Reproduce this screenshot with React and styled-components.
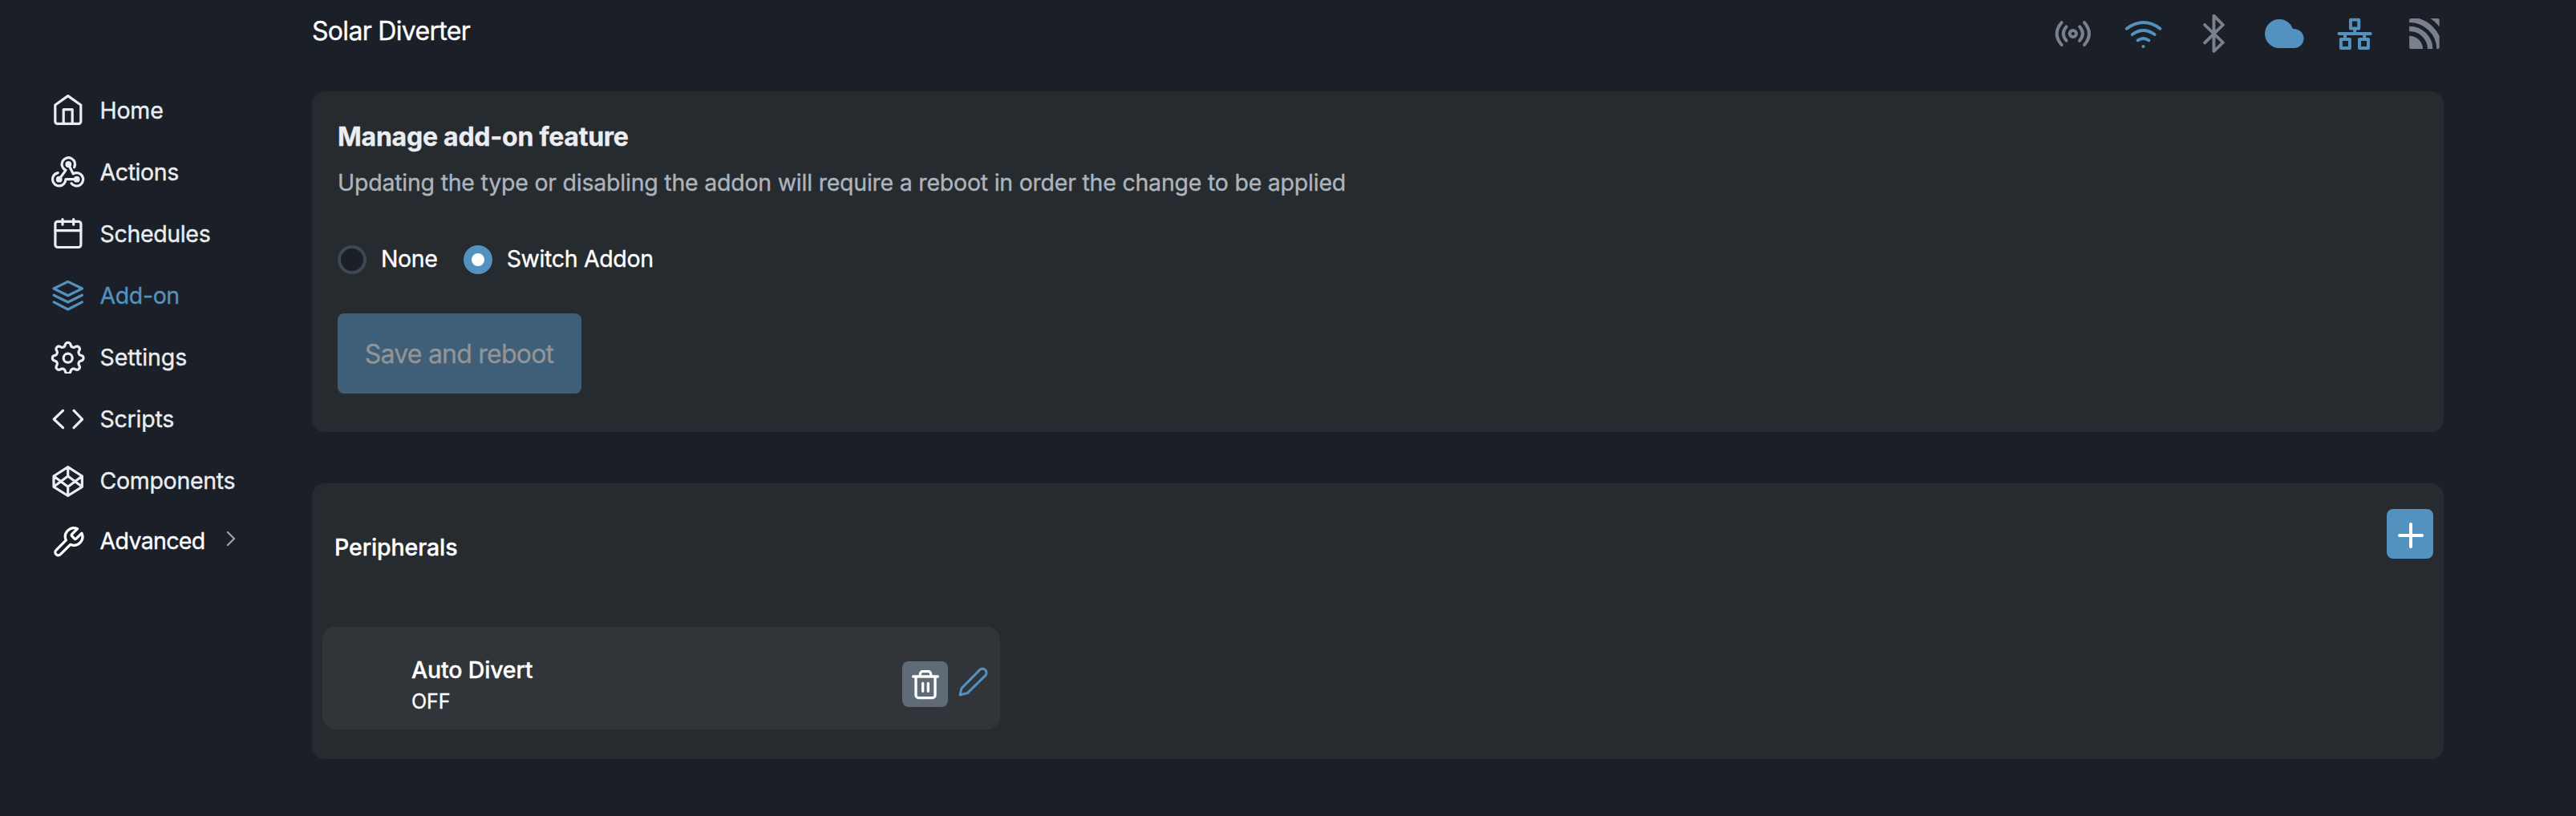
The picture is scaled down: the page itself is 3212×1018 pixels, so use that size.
import React, { useState } from "react";
import styled, { createGlobalStyle } from "styled-components";

const BLUE = "#5391bf";
const GREY = "#7b818c";
const LIGHT = "#ecedf0";

const GlobalStyle = createGlobalStyle`
  * { box-sizing: border-box; }
  body {
    margin: 0;
    background: #1b1f27;
    color: #fff;
    font-family: Inter, "Liberation Sans", sans-serif;
    -webkit-text-stroke: 0.35px currentColor;
  }
`;

const Page = styled.div`
  display: flex;
  min-height: 1018px;
`;

const Sidebar = styled.nav`
  flex: none;
  width: 389px;
  padding: 115px 0 0 62px;
  display: flex;
  flex-direction: column;
  gap: 33px;
`;

const NavItem = styled.a`
  display: flex;
  align-items: center;
  gap: 18.5px;
  height: 44px;
  margin-top: ${(p) => (p.$last ? "-2px" : 0)};
  color: ${(p) => p.$color || LIGHT};
  font-size: 28.5px;
  line-height: 44px;
  text-decoration: none;
`;

const NavLabel = styled.span`
  margin-top: 2px;
  letter-spacing: ${(p) => p.$track}px;
`;

const NavIcon = styled.svg`
  flex: none;
  display: block;
  width: 44px;
  height: 44px;
  fill: none;
  stroke: currentColor;
  stroke-width: 3.2;
  stroke-linecap: round;
  stroke-linejoin: round;
`;

const Chevron = styled.svg`
  flex: none;
  width: 14px;
  height: 22px;
  margin: 0 0 5px 7px;
  fill: none;
  stroke: #9aa1ad;
  stroke-width: 2.4;
  stroke-linecap: round;
  stroke-linejoin: round;
`;

const Main = styled.main`
  width: 2658px;
  display: flex;
  flex-direction: column;
`;

const TopBar = styled.header`
  display: flex;
  justify-content: space-between;
  height: 114px;
  padding-top: 18px;
`;

const DeviceName = styled.div`
  font-size: 32px;
  line-height: 42px;
  letter-spacing: -0.69px;
`;

const StatusIcons = styled.div`
  display: flex;
  gap: 38.5px;
  margin-right: -2.6px;
`;

const StatusIcon = styled.svg`
  display: block;
  width: 49.6px;
  height: 48px;
  color: ${(p) => (p.$active ? BLUE : GREY)};
  fill: none;
  stroke: currentColor;
  stroke-width: 11.5;
  stroke-linecap: round;
  stroke-linejoin: round;
  overflow: visible;
`;

const Card = styled.section`
  background: #262b2f;
  border-radius: 16px;
`;

const FeatureCard = styled(Card)`
  height: 425px;
  padding: 37px 32px 0;
`;

const PeripheralCard = styled(Card)`
  height: 344px;
  margin-top: 64px;
  padding: 32px 13px 0;
`;

const CardTitle = styled.h2`
  margin: 0;
  color: ${LIGHT};
  font-size: 32px;
  font-weight: 700;
  line-height: 40px;
  letter-spacing: -0.24px;
`;

const Description = styled.p`
  margin: 17px 0 0;
  color: #adb4be;
  font-size: 28.5px;
  line-height: 40px;
  letter-spacing: -0.225px;
`;

const RadioGroup = styled.div`
  display: flex;
  gap: 32px;
  margin-top: 58px;
`;

const RadioOption = styled.label`
  display: flex;
  gap: 18px;
  height: 36px;
  font-size: 28.5px;
  line-height: 33px;
  letter-spacing: -0.35px;
`;

const Radio = styled.input`
  appearance: none;
  flex: none;
  width: 36px;
  height: 36px;
  margin: 0;
  border: 4px solid #3e4855;
  border-radius: 50%;
  background: #1b1f27;
  &:checked {
    border: 10px solid ${BLUE};
    background: #fff;
  }
`;

const SaveButton = styled.button`
  display: block;
  width: 304px;
  height: 100px;
  margin-top: 49px;
  padding: 1px 1px 0 0;
  border: 0;
  border-radius: 8px;
  background: #3f5e77;
  color: #929496;
  font: 400 32px/40px Inter, "Liberation Sans", sans-serif;
  letter-spacing: -0.77px;
`;

const SectionHead = styled.div`
  display: flex;
  justify-content: space-between;
  height: 147px;
  padding-left: 15px;
`;

const SectionTitle = styled.h3`
  margin: 28px 0 0;
  font-size: 28.5px;
  font-weight: 500;
  line-height: 40px;
  letter-spacing: -0.1px;
`;

const AddButton = styled.button`
  width: 58px;
  height: 62px;
  padding: 0;
  border: 0;
  border-radius: 8px;
  background: ${BLUE};
`;

const Peripheral = styled.div`
  display: flex;
  width: 845px;
  height: 128px;
  padding: 34px 11px 0 111px;
  border-radius: 16px;
  background: #313539;
`;

const PeripheralText = styled.div`
  flex: 1;
`;

const PeripheralName = styled.div`
  font-size: 28.5px;
  font-weight: 500;
  line-height: 40px;
  letter-spacing: -0.17px;
`;

const PeripheralState = styled.div`
  font-size: 25px;
  line-height: 38px;
`;

const DeleteButton = styled.button`
  width: 57px;
  height: 57px;
  margin: 9px 10px 0 0;
  padding: 0;
  border: 0;
  border-radius: 8px;
  background: #5f6b77;
`;

const EditButton = styled.button`
  width: 44px;
  height: 44px;
  margin-top: 12px;
  padding: 0;
  border: 0;
  background: none;
`;

const Glyph = styled.svg`
  display: block;
  width: 100%;
  height: 100%;
  fill: none;
  stroke: ${(p) => p.$color};
  stroke-linecap: round;
  stroke-linejoin: round;
`;

const gear = Array.from({ length: 145 }, (_, i) => {
  const a = (i / 144) * Math.PI * 2;
  const r = 17 + 2.5 * Math.tanh(1.5 * Math.cos(8 * a));
  return `${i ? "L" : "M"}${(22.7 + r * Math.cos(a)).toFixed(2)} ${(23.7 + r * Math.sin(a)).toFixed(2)}`;
}).join("") + "Z";

const icons = {
  home: (
    <>
      <path d="M22.7 4.6 38.8 16V36.4a3 3 0 0 1-3 3H9.8a3 3 0 0 1-3-3V16Z" />
      <path d="M17.2 39.4V21.6H28.2V39.4" />
    </>
  ),
  actions: (
    <>
      <path d="M11.7 31.7 20 20.4A8.2 8.2 0 1 1 30.6 16.7" />
      <path d="M23.3 13 29.2 24.8A8.2 8.2 0 1 1 27 36.8" />
      <path d="M33.7 31.7H19.9A8.2 8.2 0 1 1 10.2 23.6" />
      <g fill="currentColor" stroke="none">
        <circle cx="23.3" cy="13" r="3.9" />
        <circle cx="11.7" cy="31.7" r="3.9" />
        <circle cx="33.7" cy="31.7" r="3.9" />
      </g>
    </>
  ),
  schedules: (
    <>
      <rect x="6.9" y="7.3" width="32" height="32.2" rx="3" />
      <path d="M6.9 18.6H38.9M16 4.5V11.2M29.7 4.5V11.2" />
    </>
  ),
  addon: (
    <path d="M22.7 5.4 5 14 22.7 22.7 40.5 14ZM5.2 22.2 22.7 31 40.4 22.2M5.2 30.9 22.7 40 40.4 30.9" />
  ),
  settings: (
    <>
      <clipPath id="gear-edge"><rect width="46" height="43" /></clipPath>
      <g clipPath="url(#gear-edge)">
        <path d={gear} />
        <circle cx="22.7" cy="23.7" r="5.5" />
      </g>
    </>
  ),
  scripts: <path d="M16.6 12.2 5.2 23 16.6 33.6M30 12.2 40.6 23 30 33.6" />,
  components: (
    <path d="M22.7 5.6 40.4 17V30.3L22.7 41.5 5 30.3V17ZM22.7 5.6V17M22.7 30.3V41.5M5 17 22.7 30.3 40.4 17M5 30.3 22.7 17 40.4 30.3" />
  ),
  advanced: (
    <g transform="translate(1.5 3.2) scale(1.79)" strokeWidth="1.8">
      <path d="M14.7 6.3a1 1 0 0 0 0 1.4l1.6 1.6a1 1 0 0 0 1.4 0l3.77-3.77a6 6 0 0 1-7.94 7.94l-6.91 6.91a2.12 2.12 0 0 1-3-3l6.91-6.91a6 6 0 0 1 7.94-7.94l-3.76 3.76z" />
    </g>
  ),
};

const navItems = [
  { id: "home", label: "Home", track: -0.2 },
  { id: "actions", label: "Actions", track: -0.4 },
  { id: "schedules", label: "Schedules", track: -0.34 },
  { id: "addon", label: "Add-on", track: -0.38 },
  { id: "settings", label: "Settings", track: -0.05 },
  { id: "scripts", label: "Scripts", track: -0.24 },
  { id: "components", label: "Components", track: -0.3 },
  { id: "advanced", label: "Advanced", track: -0.66, color: "#fff", last: true },
];

const statusItems = [
  {
    id: "access-point",
    draw: (
      <>
        <circle cx="72" cy="72" r="12" />
        <path d="M48 46Q26 72 48 98M31 30Q-4 72 31 114M96 46Q118 72 96 98M113 30Q148 72 113 114" />
      </>
    ),
  },
  {
    id: "wifi",
    active: true,
    draw: (
      <>
        <path d="M11 53Q72 7 132 53M31 75Q71 45 112 75M51 97Q71 83 91 97" />
        <circle cx="71" cy="120" r="6" fill="currentColor" stroke="none" />
      </>
    ),
  },
  { id: "bluetooth", draw: <path d="M38 39 104 105 71 138V5L104 39 38 106" /> },
  {
    id: "cloud",
    active: true,
    draw: (
      <path
        d="M53 18A53 54 0 0 0 53 126H105A36 36 0 0 0 105 54H101.500A52 54 0 0 0 53 18Z"
        fill="currentColor"
        stroke="none"
      />
    ),
  },
  {
    id: "network",
    active: true,
    draw: (
      <>
        <rect x="55" y="20" width="30" height="32.500" />
        <rect x="20" y="93" width="32" height="33" />
        <rect x="87" y="93" width="32" height="33" />
        <path d="M13 72H127M70 56V72M35 74V90M105 74V90" />
      </>
    ),
  },
  {
    id: "feed",
    draw: (
      <>
        <clipPath id="feed-edge"><rect x="12" y="15" width="109" height="114" rx="6" /></clipPath>
        <g clipPath="url(#feed-edge)">
          <circle cx="12" cy="129" r="49" fill="currentColor" stroke="none" />
          <circle cx="12" cy="129" r="75.5" strokeWidth="19" />
          <circle cx="12" cy="129" r="109" strokeWidth="20" />
          <circle cx="12" cy="129" r="152" strokeWidth="30" />
        </g>
      </>
    ),
  },
];

export default function App() {
  const [addon, setAddon] = useState("Switch Addon");
  return (
    <>
      <GlobalStyle />
      <Page>
        <Sidebar>
          {navItems.map((n) => (
            <NavItem key={n.id} $color={n.id === "addon" ? BLUE : n.color} $last={n.last}>
              <NavIcon viewBox="0 0 44 44">{icons[n.id]}</NavIcon>
              <NavLabel $track={n.track}>{n.label}</NavLabel>
              {n.last && (
                <Chevron viewBox="0 0 14 22">
                  <path d="M3 3 11 11 3 19" />
                </Chevron>
              )}
            </NavItem>
          ))}
        </Sidebar>
        <Main>
          <TopBar>
            <DeviceName>Solar Diverter</DeviceName>
            <StatusIcons>
              {statusItems.map((s) => (
                <StatusIcon key={s.id} viewBox="0 0 144 144" preserveAspectRatio="none" $active={s.active}>
                  {s.draw}
                </StatusIcon>
              ))}
            </StatusIcons>
          </TopBar>
          <FeatureCard>
            <CardTitle>Manage add-on feature</CardTitle>
            <Description>
              Updating the type or disabling the addon will require a reboot in order the change to be applied
            </Description>
            <RadioGroup>
              {["None", "Switch Addon"].map((name) => (
                <RadioOption key={name}>
                  <Radio type="radio" name="addon" checked={addon === name} onChange={() => setAddon(name)} />
                  {name}
                </RadioOption>
              ))}
            </RadioGroup>
            <SaveButton disabled>Save and reboot</SaveButton>
          </FeatureCard>
          <PeripheralCard>
            <SectionHead>
              <SectionTitle>Peripherals</SectionTitle>
              <AddButton>
                <Glyph viewBox="0 0 174 186" $color="#fff" strokeWidth="12">
                  <path d="M48 99H132M90 57V141" />
                </Glyph>
              </AddButton>
            </SectionHead>
            <Peripheral>
              <PeripheralText>
                <PeripheralName>Auto Divert</PeripheralName>
                <PeripheralState>OFF</PeripheralState>
              </PeripheralText>
              <DeleteButton>
                <Glyph viewBox="0 0 171 171" $color="#fff" strokeWidth="10">
                  <path d="M41 57H133M51 57V127a10 10 0 0 0 10 10H113a10 10 0 0 0 10-10V57M67 57V48a10 10 0 0 1 10-10H97a10 10 0 0 1 10 10V57M77 82V112M97 82V112" />
                </Glyph>
              </DeleteButton>
              <EditButton>
                <Glyph viewBox="0 0 132 132" $color={BLUE} strokeWidth="9">
                  <path d="M15 117 21 92 90 22A15 15 0 0 1 111 43L43 110Z" />
                </Glyph>
              </EditButton>
            </Peripheral>
          </PeripheralCard>
        </Main>
      </Page>
    </>
  );
}
